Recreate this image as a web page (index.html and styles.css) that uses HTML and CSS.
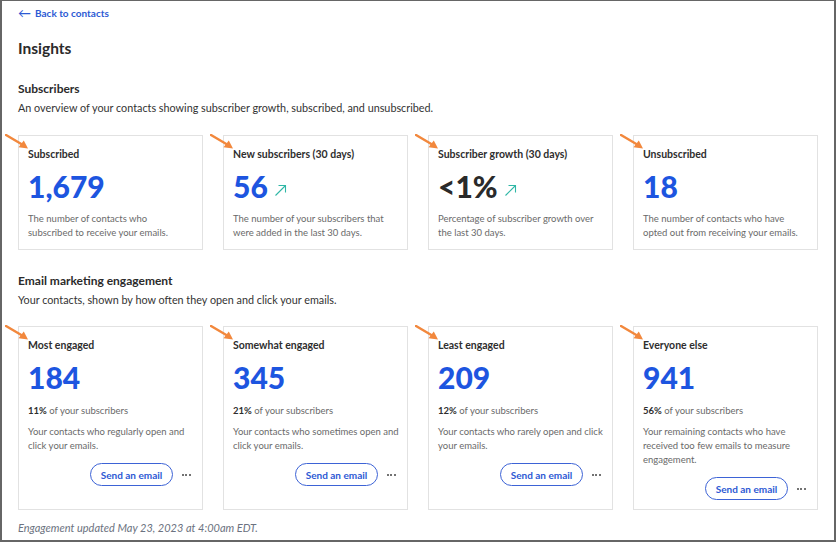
FILE: index.html
```html
<!DOCTYPE html>
<html lang="en">
<head>
<meta charset="utf-8">
<title>Insights</title>
<link rel="stylesheet" href="styles.css">
</head>
<body>
<div class="frame">
  <a class="back" href="#"><span class="back-arrow">&#8592;</span> Back to contacts</a>
  <h1 class="page-title">Insights</h1>

  <section class="section">
    <h2 class="section-title">Subscribers</h2>
    <p class="section-desc">An overview of your contacts showing subscriber growth, subscribed, and unsubscribed.</p>
    <div class="cards">
      <div class="card">
        <svg class="pointer" viewBox="0 0 26 16" width="26" height="16"><path d="M1 1 L18 11" stroke="#f2883d" stroke-width="2.4" stroke-linecap="round"/><path d="M23 14.5 L13.5 13.2 L18.8 6.6 Z" fill="#f2883d"/></svg>
        <div class="card-title">Subscribed</div>
        <div class="metric">1,679</div>
        <p class="card-desc">The number of contacts who subscribed to receive your emails.</p>
      </div>
      <div class="card">
        <svg class="pointer" viewBox="0 0 26 16" width="26" height="16"><path d="M1 1 L18 11" stroke="#f2883d" stroke-width="2.4" stroke-linecap="round"/><path d="M23 14.5 L13.5 13.2 L18.8 6.6 Z" fill="#f2883d"/></svg>
        <div class="card-title">New subscribers (30 days)</div>
        <div class="metric">56 <svg class="trend" viewBox="0 0 13 13" width="13" height="13"><path d="M1.5 11.5 L11.5 1.5 M4.5 1.5 H11.5 V8.5" fill="none" stroke="#2fb7a6" stroke-width="1.1"/></svg></div>
        <p class="card-desc">The number of your subscribers that were added in the last 30 days.</p>
      </div>
      <div class="card">
        <svg class="pointer" viewBox="0 0 26 16" width="26" height="16"><path d="M1 1 L18 11" stroke="#f2883d" stroke-width="2.4" stroke-linecap="round"/><path d="M23 14.5 L13.5 13.2 L18.8 6.6 Z" fill="#f2883d"/></svg>
        <div class="card-title">Subscriber growth (30 days)</div>
        <div class="metric metric-dark">&lt;1% <svg class="trend" viewBox="0 0 13 13" width="13" height="13"><path d="M1.5 11.5 L11.5 1.5 M4.5 1.5 H11.5 V8.5" fill="none" stroke="#2fb7a6" stroke-width="1.1"/></svg></div>
        <p class="card-desc">Percentage of subscriber growth over the last 30 days.</p>
      </div>
      <div class="card">
        <svg class="pointer" viewBox="0 0 26 16" width="26" height="16"><path d="M1 1 L18 11" stroke="#f2883d" stroke-width="2.4" stroke-linecap="round"/><path d="M23 14.5 L13.5 13.2 L18.8 6.6 Z" fill="#f2883d"/></svg>
        <div class="card-title">Unsubscribed</div>
        <div class="metric">18</div>
        <p class="card-desc">The number of contacts who have opted out from receiving your emails.</p>
      </div>
    </div>
  </section>

  <section class="section section-second">
    <h2 class="section-title">Email marketing engagement</h2>
    <p class="section-desc">Your contacts, shown by how often they open and click your emails.</p>
    <div class="cards">
      <div class="card">
        <svg class="pointer" viewBox="0 0 26 16" width="26" height="16"><path d="M1 1 L18 11" stroke="#f2883d" stroke-width="2.4" stroke-linecap="round"/><path d="M23 14.5 L13.5 13.2 L18.8 6.6 Z" fill="#f2883d"/></svg>
        <div class="card-title">Most engaged</div>
        <div class="metric">184</div>
        <p class="pct"><b>11%</b> of your subscribers</p>
        <p class="card-desc">Your contacts who regularly open and click your emails.</p>
        <div class="actions"><button class="send">Send an email</button><span class="more"><i></i><i></i><i></i></span></div>
      </div>
      <div class="card">
        <svg class="pointer" viewBox="0 0 26 16" width="26" height="16"><path d="M1 1 L18 11" stroke="#f2883d" stroke-width="2.4" stroke-linecap="round"/><path d="M23 14.5 L13.5 13.2 L18.8 6.6 Z" fill="#f2883d"/></svg>
        <div class="card-title">Somewhat engaged</div>
        <div class="metric">345</div>
        <p class="pct"><b>21%</b> of your subscribers</p>
        <p class="card-desc">Your contacts who sometimes open and click your emails.</p>
        <div class="actions"><button class="send">Send an email</button><span class="more"><i></i><i></i><i></i></span></div>
      </div>
      <div class="card">
        <svg class="pointer" viewBox="0 0 26 16" width="26" height="16"><path d="M1 1 L18 11" stroke="#f2883d" stroke-width="2.4" stroke-linecap="round"/><path d="M23 14.5 L13.5 13.2 L18.8 6.6 Z" fill="#f2883d"/></svg>
        <div class="card-title">Least engaged</div>
        <div class="metric">209</div>
        <p class="pct"><b>12%</b> of your subscribers</p>
        <p class="card-desc">Your contacts who rarely open and click your emails.</p>
        <div class="actions"><button class="send">Send an email</button><span class="more"><i></i><i></i><i></i></span></div>
      </div>
      <div class="card">
        <svg class="pointer" viewBox="0 0 26 16" width="26" height="16"><path d="M1 1 L18 11" stroke="#f2883d" stroke-width="2.4" stroke-linecap="round"/><path d="M23 14.5 L13.5 13.2 L18.8 6.6 Z" fill="#f2883d"/></svg>
        <div class="card-title">Everyone else</div>
        <div class="metric">941</div>
        <p class="pct"><b>56%</b> of your subscribers</p>
        <p class="card-desc">Your remaining contacts who have received too few emails to measure engagement.</p>
        <div class="actions"><button class="send">Send an email</button><span class="more"><i></i><i></i><i></i></span></div>
      </div>
    </div>
  </section>

  <p class="footnote">Engagement updated May 23, 2023 at 4:00am EDT.</p>
</div>
</body>
</html>
```
FILE: styles.css
```css
* { box-sizing: border-box; }
html, body { margin: 0; padding: 0; background: #fff; }
body { font-family: Lato, "Noto Sans", sans-serif; color: #2b2b2b; }

.frame {
  width: 836px;
  height: 542px;
  border: 2px solid #666;
  border-top-width: 1px;
  padding: 5px 16px 0 16px;
  overflow: hidden;
}

.back {
  display: flex;
  align-items: center;
  gap: 4px;
  font-size: 10px;
  line-height: 14px;
  font-weight: 700;
  color: #2d5ad4;
  text-decoration: none;
}
.back-arrow { font-size: 13px; font-weight: 400; line-height: 14px; }

.page-title {
  margin: 18px 0 0;
  font-size: 15.5px;
  line-height: 20px;
  font-weight: 700;
  color: #2b2b2b;
}

.section { margin-top: 23px; }
.section-second { margin-top: 23px; }

.section-title {
  margin: 0;
  font-size: 12px;
  line-height: 16px;
  font-weight: 700;
  color: #2b2b2b;
}
.section-desc {
  margin: 3px 0 0;
  font-size: 10.8px;
  line-height: 15px;
  color: #333;
}

.cards {
  display: grid;
  grid-template-columns: repeat(4, 1fr);
  gap: 20px;
  margin-top: 20px;
}
.section-second .cards { margin-top: 19px; }

.card {
  position: relative;
  border: 1px solid #e2e2e2;
  padding: 11px 8px 9px 9px;
}
.pointer {
  position: absolute;
  left: -14px;
  top: -2px;
}

.card-title {
  font-size: 10.5px;
  line-height: 14px;
  font-weight: 700;
  color: #2e2e2e;
}
.metric {
  margin-top: 9px;
  font-size: 30px;
  line-height: 32px;
  font-weight: 900;
  color: #1d55e0;
  display: flex;
  align-items: center;
  gap: 6px;
}
.metric-dark { color: #2a2a2a; }
.trend { margin-top: 8px; }

.card-desc {
  margin: 10px 0 0;
  font-size: 9.5px;
  line-height: 14px;
  color: #6a6a6a;
}
.pct {
  margin: 11px 0 0;
  font-size: 9.5px;
  line-height: 14px;
  color: #6a6a6a;
}
.pct b { color: #2e2e2e; font-weight: 700; }
.pct + .card-desc { margin-top: 7px; }

.actions {
  display: flex;
  justify-content: flex-end;
  align-items: center;
  gap: 5px;
  margin-top: 10px;
}
.send {
  height: 23px;
  width: 83px;
  padding: 0;
  border: 1px solid #3d63d6;
  border-radius: 12px;
  background: #fff;
  font-family: Lato, "Noto Sans", sans-serif;
  font-size: 10px;
  font-weight: 700;
  color: #2d5ad4;
}
.more {
  width: 16px;
  display: flex;
  justify-content: center;
  gap: 1.5px;
}
.more i {
  width: 2px;
  height: 2px;
  border-radius: 50%;
  background: #444;
}

.footnote {
  margin: 11px 0 0;
  font-size: 11px;
  line-height: 14px;
  font-style: italic;
  color: #6b7280;
}
```
